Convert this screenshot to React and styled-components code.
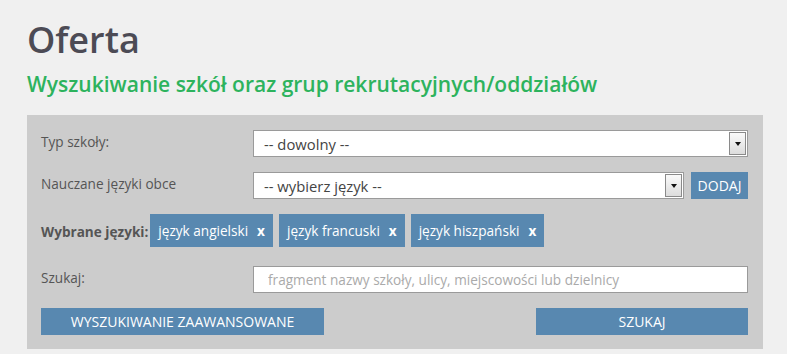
import React from "react";
import styled, { createGlobalStyle } from "styled-components";

const Global = createGlobalStyle`
  html, body { margin: 0; padding: 0; background: #f0f0f0; }
  body { font-family: "Open Sans", "Liberation Sans", sans-serif; }
  * { box-sizing: border-box; }
`;

const Page = styled.div`
  padding: 18px 24px 0 27px;
  width: 787px;
`;

const Title = styled.h1`
  margin: 0;
  font-size: 36px;
  font-weight: 600;
  color: #4c4b55;
  line-height: 44px;
`;

const Subtitle = styled.h2`
  margin: 7px 0 0;
  font-size: 21px;
  font-weight: 600;
  color: #2db35d;
  line-height: 30px;
`;

const Panel = styled.div`
  margin-top: 16px;
  width: 736px;
  background: #cccccc;
  padding: 15px 15px 14px 14px;
  display: flex;
  flex-direction: column;
`;

const Row = styled.div`
  display: grid;
  grid-template-columns: 212px 1fr;
  align-items: center;
  margin-top: ${(p) => p.$mt || 0}px;
`;

const Label = styled.div`
  font-size: 13.6px;
  color: #555;
  white-space: nowrap;
  font-weight: ${(p) => (p.$bold ? 700 : 400)};
  margin-top: -4px;
`;

const Controls = styled.div`
  display: flex;
  align-items: center;
  gap: 7px;
`;

const SelectBox = styled.div`
  flex: 1;
  height: 27px;
  background: #fff;
  border: 1px solid #9a9a9a;
  display: flex;
  align-items: stretch;
`;

const SelectText = styled.div`
  flex: 1;
  padding-left: 10px;
  font-size: 14.8px;
  color: #444;
  display: flex;
  align-items: center;
`;

const Arrow = styled.div`
  width: 17px;
  margin: 1px;
  background: linear-gradient(#fafafa, #dcdcdc);
  border: 1px solid #8a8a8a;
  display: flex;
  align-items: center;
  justify-content: center;
  &::after {
    content: "";
    border-left: 3.5px solid transparent;
    border-right: 3.5px solid transparent;
    border-top: 4px solid #111;
  }
`;

const SmallButton = styled.button`
  height: 27px;
  width: 57px;
  padding: 0;
  background: #5888b0;
  border: none;
  color: #fff;
  font-family: inherit;
  font-size: 14px;
`;

const TagRow = styled.div`
  display: flex;
  align-items: center;
  margin-top: 15px;
`;

const TagLabel = styled(Label)`
  margin-top: 2px;
  margin-right: 2px;
`;

const Tags = styled.div`
  display: flex;
  gap: 6px;
`;

const Tag = styled.div`
  height: 33px;
  padding: 0 8px 0 8px;
  background: #5888b0;
  color: #fff;
  font-size: 13.6px;
  display: flex;
  align-items: center;
  gap: 9px;
`;

const TagX = styled.span`
  font-weight: 700;
`;

const Input = styled.input`
  flex: 1;
  height: 27px;
  border: 1px solid #9a9a9a;
  background: #fff;
  padding: 0 14px;
  font-family: inherit;
  font-size: 13.6px;
  outline: none;
  &::placeholder { color: #aaa; }
`;

const Buttons = styled.div`
  display: flex;
  justify-content: space-between;
  margin-top: 15px;
`;

const Button = styled.button`
  width: ${(p) => p.$w}px;
  height: 27px;
  background: #5888b0;
  border: none;
  color: #fff;
  font-family: inherit;
  font-size: 14px;
  text-transform: uppercase;
`;

export default function App() {
  return (
    <>
      <Global />
      <Page>
        <Title>Oferta</Title>
        <Subtitle>Wyszukiwanie szkół oraz grup rekrutacyjnych/oddziałów</Subtitle>
        <Panel>
          <Row>
            <Label>Typ szkoły:</Label>
            <Controls>
              <SelectBox>
                <SelectText>-- dowolny --</SelectText>
                <Arrow />
              </SelectBox>
            </Controls>
          </Row>
          <Row $mt={15}>
            <Label>Nauczane języki obce</Label>
            <Controls>
              <SelectBox>
                <SelectText>-- wybierz język --</SelectText>
                <Arrow />
              </SelectBox>
              <SmallButton>DODAJ</SmallButton>
            </Controls>
          </Row>
          <TagRow>
            <TagLabel $bold>Wybrane języki:</TagLabel>
            <Tags>
              {["język angielski", "język francuski", "język hiszpański"].map((t) => (
                <Tag key={t}>
                  {t}
                  <TagX>x</TagX>
                </Tag>
              ))}
            </Tags>
          </TagRow>
          <Row $mt={19}>
            <Label>Szukaj:</Label>
            <Controls>
              <Input placeholder="fragment nazwy szkoły, ulicy, miejscowości lub dzielnicy" />
            </Controls>
          </Row>
          <Buttons>
            <Button $w={283}>Wyszukiwanie zaawansowane</Button>
            <Button $w={212}>Szukaj</Button>
          </Buttons>
        </Panel>
      </Page>
    </>
  );
}
